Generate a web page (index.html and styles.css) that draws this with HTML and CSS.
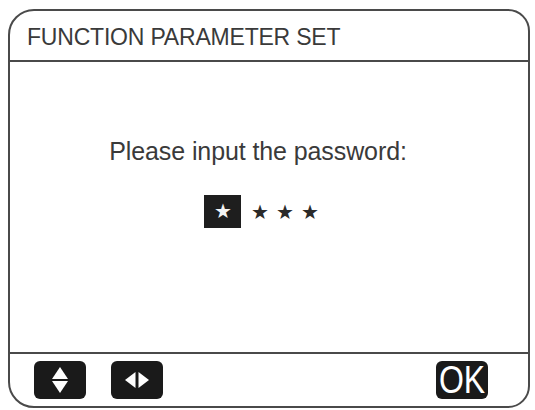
FILE: index.html
```html
<!DOCTYPE html>
<html lang="en">
<head>
    <meta charset="UTF-8">
    <meta name="viewport" content="width=device-width, initial-scale=1.0">
    <title>Function Parameter Set</title>
    <link rel="stylesheet" href="styles.css">
</head>
<body>
    <div class="screen">
        <div class="title">FUNCTION PARAMETER SET</div>
        <div class="main">
            <div class="prompt">Please input the password:</div>
            <div class="pwd">
                <span class="digit active">&#9733;</span>
                <span class="digit">&#9733;</span>
                <span class="digit">&#9733;</span>
                <span class="digit">&#9733;</span>
            </div>
        </div>
        <div class="bar">
            <div class="key">
                <svg width="22" height="32" viewBox="0 0 22 32">
                    <polygon points="11,3 19,15 3,15" fill="#fff"/>
                    <polygon points="3,17 19,17 11,29" fill="#fff"/>
                </svg>
            </div>
            <div class="key">
                <svg width="30" height="22" viewBox="0 0 30 22">
                    <polygon points="3,11 13.5,3 13.5,19" fill="#fff"/>
                    <polygon points="16.5,3 27,11 16.5,19" fill="#fff"/>
                </svg>
            </div>
            <div class="key ok"><span>OK</span></div>
        </div>
    </div>
</body>
</html>
```

FILE: styles.css
```css
*{
    margin: 0;
    padding: 0;
    box-sizing: border-box;
}
body{
    background: #fff;
    font-family: "Liberation Sans", Arial, sans-serif;
    color: #3a3a3a;
}
.screen{
    margin: 9px 5px 2px 8px;
    height: 399px;
    border: 2px solid #4a4a4a;
    border-radius: 26px 22px 22px 26px;
    display: flex;
    flex-direction: column;
}
.title{
    height: 51px;
    border-bottom: 2px solid #4a4a4a;
    padding: 13px 0 0 17px;
    font-size: 23px;
    letter-spacing: -0.2px;
}
.main{
    flex: 1;
    display: flex;
    flex-direction: column;
    align-items: center;
    padding: 75px 22px 0 0;
}
.prompt{
    font-size: 25px;
    letter-spacing: -0.1px;
}
.pwd{
    display: flex;
    align-items: center;
    margin-top: 29px;
    margin-left: 10px;
}
.digit{
    width: 25px;
    text-align: center;
    font-size: 20px;
    color: #2a2a2a;
}
.digit.active{
    width: 37px;
    height: 33px;
    line-height: 33px;
    margin-right: 6px;
    background: #1e1e1e;
    color: #f4f4f4;
}
.bar{
    height: 54px;
    border-top: 2px solid #4a4a4a;
    display: flex;
    align-items: flex-start;
    padding: 7px 0 0 24px;
}
.key{
    width: 52px;
    height: 38px;
    background: #1a1a1a;
    border-radius: 6px;
    display: flex;
    align-items: center;
    justify-content: center;
    margin-right: 25px;
}
.key.ok{
    margin-left: auto;
    margin-right: 40px;
    color: #fff;
    font-size: 32px;
}
.key.ok span{
    display: block;
    transform: scaleY(1.2);
    line-height: 1;
}
```
